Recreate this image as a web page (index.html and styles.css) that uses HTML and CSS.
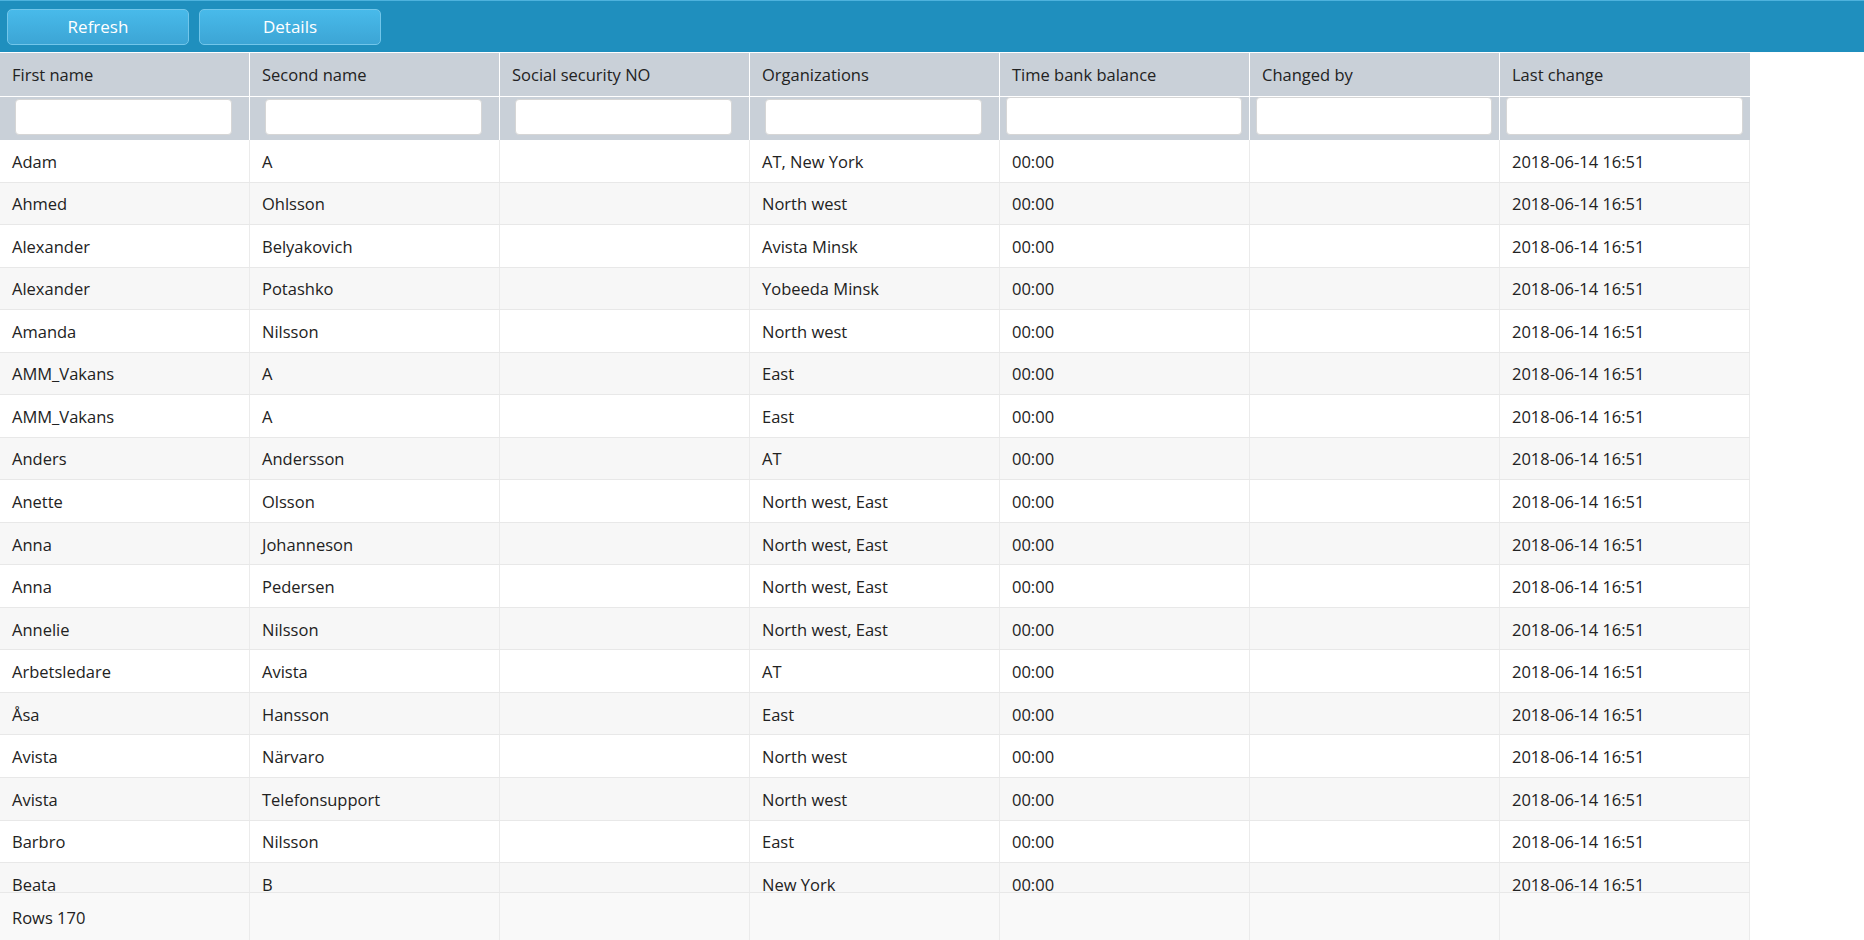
FILE: index.html
```html
<!DOCTYPE html>
<html>
<head>
<meta charset="utf-8">
<title>Time bank</title>
<link rel="stylesheet" href="styles.css">
</head>
<body>
<div class="toolbar">
  <button class="btn">Refresh</button>
  <button class="btn">Details</button>
</div>
<div class="table">
  <div class="head">
    <div class="cell">First name</div>
    <div class="cell">Second name</div>
    <div class="cell">Social security NO</div>
    <div class="cell">Organizations</div>
    <div class="cell">Time bank balance</div>
    <div class="cell">Changed by</div>
    <div class="cell">Last change</div>
  </div>
  <div class="filters">
    <div class="fcell"><input class="finput" type="text"></div>
    <div class="fcell"><input class="finput" type="text"></div>
    <div class="fcell"><input class="finput" type="text"></div>
    <div class="fcell"><input class="finput" type="text"></div>
    <div class="fcell tight"><input class="finput" type="text"></div>
    <div class="fcell tight"><input class="finput" type="text"></div>
    <div class="fcell tight"><input class="finput" type="text"></div>
  </div>
  <div class="body">
    <div class="row"><div class="cell">Adam</div><div class="cell">A</div><div class="cell"></div><div class="cell">AT, New York</div><div class="cell">00:00</div><div class="cell"></div><div class="cell">2018-06-14 16:51</div></div>
    <div class="row"><div class="cell">Ahmed</div><div class="cell">Ohlsson</div><div class="cell"></div><div class="cell">North west</div><div class="cell">00:00</div><div class="cell"></div><div class="cell">2018-06-14 16:51</div></div>
    <div class="row"><div class="cell">Alexander</div><div class="cell">Belyakovich</div><div class="cell"></div><div class="cell">Avista Minsk</div><div class="cell">00:00</div><div class="cell"></div><div class="cell">2018-06-14 16:51</div></div>
    <div class="row"><div class="cell">Alexander</div><div class="cell">Potashko</div><div class="cell"></div><div class="cell">Yobeeda Minsk</div><div class="cell">00:00</div><div class="cell"></div><div class="cell">2018-06-14 16:51</div></div>
    <div class="row"><div class="cell">Amanda</div><div class="cell">Nilsson</div><div class="cell"></div><div class="cell">North west</div><div class="cell">00:00</div><div class="cell"></div><div class="cell">2018-06-14 16:51</div></div>
    <div class="row"><div class="cell">AMM_Vakans</div><div class="cell">A</div><div class="cell"></div><div class="cell">East</div><div class="cell">00:00</div><div class="cell"></div><div class="cell">2018-06-14 16:51</div></div>
    <div class="row"><div class="cell">AMM_Vakans</div><div class="cell">A</div><div class="cell"></div><div class="cell">East</div><div class="cell">00:00</div><div class="cell"></div><div class="cell">2018-06-14 16:51</div></div>
    <div class="row"><div class="cell">Anders</div><div class="cell">Andersson</div><div class="cell"></div><div class="cell">AT</div><div class="cell">00:00</div><div class="cell"></div><div class="cell">2018-06-14 16:51</div></div>
    <div class="row"><div class="cell">Anette</div><div class="cell">Olsson</div><div class="cell"></div><div class="cell">North west, East</div><div class="cell">00:00</div><div class="cell"></div><div class="cell">2018-06-14 16:51</div></div>
    <div class="row"><div class="cell">Anna</div><div class="cell">Johanneson</div><div class="cell"></div><div class="cell">North west, East</div><div class="cell">00:00</div><div class="cell"></div><div class="cell">2018-06-14 16:51</div></div>
    <div class="row"><div class="cell">Anna</div><div class="cell">Pedersen</div><div class="cell"></div><div class="cell">North west, East</div><div class="cell">00:00</div><div class="cell"></div><div class="cell">2018-06-14 16:51</div></div>
    <div class="row"><div class="cell">Annelie</div><div class="cell">Nilsson</div><div class="cell"></div><div class="cell">North west, East</div><div class="cell">00:00</div><div class="cell"></div><div class="cell">2018-06-14 16:51</div></div>
    <div class="row"><div class="cell">Arbetsledare</div><div class="cell">Avista</div><div class="cell"></div><div class="cell">AT</div><div class="cell">00:00</div><div class="cell"></div><div class="cell">2018-06-14 16:51</div></div>
    <div class="row"><div class="cell">Åsa</div><div class="cell">Hansson</div><div class="cell"></div><div class="cell">East</div><div class="cell">00:00</div><div class="cell"></div><div class="cell">2018-06-14 16:51</div></div>
    <div class="row"><div class="cell">Avista</div><div class="cell">Närvaro</div><div class="cell"></div><div class="cell">North west</div><div class="cell">00:00</div><div class="cell"></div><div class="cell">2018-06-14 16:51</div></div>
    <div class="row"><div class="cell">Avista</div><div class="cell">Telefonsupport</div><div class="cell"></div><div class="cell">North west</div><div class="cell">00:00</div><div class="cell"></div><div class="cell">2018-06-14 16:51</div></div>
    <div class="row"><div class="cell">Barbro</div><div class="cell">Nilsson</div><div class="cell"></div><div class="cell">East</div><div class="cell">00:00</div><div class="cell"></div><div class="cell">2018-06-14 16:51</div></div>
    <div class="row"><div class="cell">Beata</div><div class="cell">B</div><div class="cell"></div><div class="cell">New York</div><div class="cell">00:00</div><div class="cell"></div><div class="cell">2018-06-14 16:51</div></div>
  </div>
  <div class="footer">
    <div class="cell">Rows 170</div>
    <div class="cell"></div>
    <div class="cell"></div>
    <div class="cell"></div>
    <div class="cell"></div>
    <div class="cell"></div>
    <div class="cell"></div>
  </div>
</div>
</body>
</html>
```
FILE: styles.css
```css
html, body {
  margin: 0;
  padding: 0;
  background: #ffffff;
  overflow: hidden;
}
body {
  font-family: "Open Sans", "Noto Sans", sans-serif;
  font-size: 16.5px;
  color: #222;
  height: 940px;
}
.toolbar {
  box-sizing: border-box;
  height: 52px;
  background: #1f8fbe;
  border-top: 1px solid #4db2dd;
  display: flex;
  align-items: flex-start;
  gap: 10px;
  padding: 8px 0 0 7px;
}
.btn {
  box-sizing: border-box;
  width: 182px;
  height: 36px;
  border: 1px solid #72c6ea;
  border-radius: 5px;
  background: linear-gradient(to bottom, #48baea, #3ca5d5);
  color: #fff;
  font-family: "Open Sans", "Noto Sans", sans-serif;
  font-size: 17px;
  padding: 0 0 1px 0;
  cursor: pointer;
}
.table {
  width: 1750px;
}
.head, .filters, .row, .footer {
  display: grid;
  grid-template-columns: repeat(7, 250px);
}
.head {
  background: #c9d0d8;
  border-top: 1px solid #ffffff;
  border-bottom: 1px solid #ffffff;
  height: 43px;
  box-sizing: content-box;
}
.head .cell {
  border-right: 1px solid #ffffff;
  padding-bottom: 1px;
}
.filters {
  background: #c9d0d8;
  height: 43px;
}
.fcell {
  box-sizing: border-box;
  border-right: 1px solid #ffffff;
  padding: 2px 17px 0 15px;
}
.fcell.tight {
  padding: 0 7px 0 6px;
}
.fcell:last-child, .cell:last-child {
  border-right: none;
}
.finput {
  box-sizing: border-box;
  display: block;
  width: 100%;
  height: 36px;
  border: 1px solid #d6d6d6;
  border-radius: 4px;
  background: #fff;
  margin: 0;
  padding: 0 8px;
  outline: none;
}
.fcell.tight .finput {
  height: 38px;
}
.cell {
  box-sizing: border-box;
  display: flex;
  align-items: center;
  padding-left: 12px;
  white-space: nowrap;
  overflow: hidden;
}
.body {
  height: 752px;
  overflow: hidden;
}
.row {
  box-sizing: border-box;
  height: 42.54px;
  border-bottom: 1px solid #e8e8e8;
  background: #ffffff;
}
.row:nth-child(even) {
  background: #f7f7f7;
}
.row .cell, .footer .cell {
  border-right: 1px solid #ebebeb;
  padding-top: 1px;
}
.footer {
  box-sizing: border-box;
  height: 48px;
  background: #f9f9f9;
  border-top: 1px solid #e8e8e8;
}
```
